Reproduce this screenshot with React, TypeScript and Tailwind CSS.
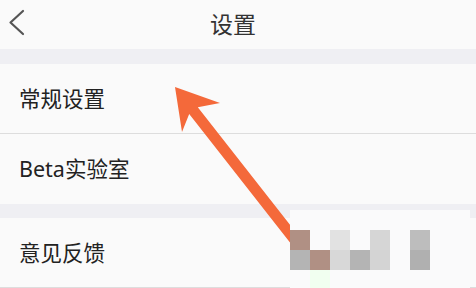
import React from "react";

const rowFont = { fontFamily: '"Noto Sans", "Noto Sans CJK SC", sans-serif' };

function Row({ label, border = true }: { label: string; border?: boolean }) {
  return (
    <div className={`h-[70px] flex items-center pl-[19px] bg-[#fafafa] ${border ? "border-b border-[#dddddd]" : ""}`}>
      <span className="text-[21.5px] text-[#222222] leading-none" style={rowFont}>{label}</span>
    </div>
  );
}

const blocks = [
  ["#b09084", "", "#e2e2e2", "", "#d6d6d6", "", "#bdbdbd"],
  ["#b4b4b4", "#b09084", "#d8d8d8", "#b4b4b4", "#d4d4d4", "", "#b0b0b0"],
  ["", "#f1fff0", "", "", "", "", ""],
];

export default function App() {
  return (
    <div className="relative w-[476px] h-[288px] overflow-hidden bg-[#fafafa]" style={rowFont}>
      <div className="h-[49px] flex items-center justify-center pr-[10px] relative bg-[#fafafa]">
        <svg className="absolute left-[8px] top-[9px]" width="18" height="28" viewBox="0 0 18 28">
          <polyline points="15,2 2.5,13.5 15,25" fill="none" stroke="#555555" strokeWidth="2.2" strokeLinecap="round" strokeLinejoin="round" />
        </svg>
        <span className="text-[23px] text-[#333333] leading-none">设置</span>
      </div>
      <div className="h-[15px] bg-[#efeff3]" />
      <Row label="常规设置" />
      <Row label="Beta实验室" border={false} />
      <div className="h-[14px] bg-[#efeff3]" />
      <Row label="意见反馈" />

      <svg className="absolute left-0 top-0" width="476" height="288" viewBox="0 0 476 288">
        <polygon
          points="175,87 220,103 197.8,107.2 302.7,241 294.1,247.8 189.2,114 182,132"
          fill="#f4693a"
        />
      </svg>

      <div className="absolute left-[290px] top-[210px] w-[180px] h-[78px] bg-[#fafafb] pt-[20px]">
        {blocks.map((row, i) => (
          <div key={i} className="flex h-[20px]">
            {row.map((c, j) => (
              <div key={j} className="w-[20px] h-[20px]" style={{ backgroundColor: c || "transparent" }} />
            ))}
          </div>
        ))}
      </div>
    </div>
  );
}
